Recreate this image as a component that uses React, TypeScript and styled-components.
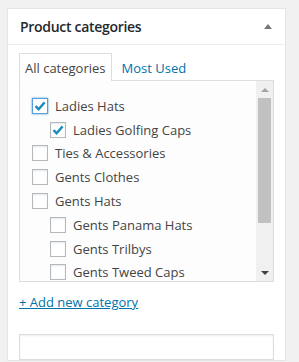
import * as React from 'react'
import styled, { createGlobalStyle } from 'styled-components'

const GlobalStyle = createGlobalStyle`
  html, body {
    margin: 0;
    background: #f1f1f1;
  }
  body {
    padding: 8px 14px 0 7px;
    font-family: 'Open Sans', 'Noto Sans', sans-serif;
    font-size: 13px;
    color: #444;
  }
`

const Panel = styled.div`
  width: 277px;
  background: #fff;
  border: 1px solid #e5e5e5;
  box-shadow: 0 1px 1px rgba(0, 0, 0, 0.04);
`

const Header = styled.div`
  height: 35px;
  display: flex;
  align-items: center;
  justify-content: space-between;
  padding: 0 12px;
  border-bottom: 1px solid #eee;
`

const Title = styled.h2`
  margin: 0;
  font-size: 14px;
  font-weight: 600;
  letter-spacing: -0.3px;
  color: #23282d;
`

const Toggle = styled.span`
  width: 0;
  height: 0;
  border-left: 4px solid transparent;
  border-right: 4px solid transparent;
  border-bottom: 5px solid #72777c;
  margin-right: 1px;
`

const Inside = styled.div`
  padding: 8px 11px 0;
`

const Tabs = styled.div`
  display: flex;
  align-items: flex-end;
`

const Tab = styled.div<{ $active?: boolean }>`
  height: 27px;
  display: flex;
  align-items: center;
  padding: 0 5px;
  margin-right: 4px;
  border: 1px solid ${p => (p.$active ? '#ddd' : 'transparent')};
  border-bottom: none;
  background: ${p => (p.$active ? '#fff' : 'transparent')};
  color: ${p => (p.$active ? '#444' : '#0073aa')};
  margin-bottom: -1px;
  position: relative;
`

const TabPanel = styled.div`
  height: 200px;
  display: flex;
  border: 1px solid #ddd;
  background: #fdfdfd;
`

const List = styled.ul`
  flex: 1;
  margin: 0;
  padding: 13px 12px 0;
  list-style: none;
  overflow: hidden;
`

const Row = styled.li<{ $depth?: number }>`
  height: 23.8px;
  display: flex;
  align-items: center;
  gap: 7px;
  padding-left: ${p => (p.$depth || 0) * 18}px;
  color: #444;
  white-space: nowrap;
`

const Box = styled.span<{ $focus?: boolean }>`
  width: 16px;
  height: 16px;
  flex: none;
  box-sizing: border-box;
  display: flex;
  align-items: center;
  justify-content: center;
  border: 1px solid ${p => (p.$focus ? '#5b9dd9' : '#b4b9be')};
  background: #fff;
  box-shadow: ${p =>
    p.$focus ? '0 0 2px rgba(30, 140, 190, 0.8)' : 'inset 0 1px 2px rgba(0, 0, 0, 0.1)'};
`

const Scrollbar = styled.div`
  width: 17px;
  flex: none;
  display: flex;
  flex-direction: column;
  background: #f0f0f0;
`

const Arrow = styled.div<{ $down?: boolean }>`
  height: 17px;
  display: flex;
  align-items: center;
  justify-content: center;

  &::after {
    content: '';
    border-left: 4px solid transparent;
    border-right: 4px solid transparent;
    ${p => (p.$down ? 'border-top: 4px solid #404040;' : 'border-bottom: 4px solid #a3a3a3;')}
  }
`

const Thumb = styled.div`
  height: 125px;
  margin: 0 2px;
  background: #c1c1c1;
`

const Track = styled.div`
  flex: 1;
`

const AddRow = styled.div`
  margin-top: 11px;
  line-height: 19px;
`

const AddLink = styled.a`
  color: #0073aa;
  text-decoration: underline;
`

const Input = styled.div`
  height: 24px;
  margin-top: 22px;
  border: 1px solid #ddd;
  background: #fff;
  box-shadow: inset 0 1px 2px rgba(0, 0, 0, 0.07);
`

const Check = () => (
  <svg width="14" height="14" viewBox="0 0 14 14">
    <path d="M2.5 7.2 L5.6 10.2 L11.6 3.4" fill="none" stroke="#1e8cbe" strokeWidth="2.4" />
  </svg>
)

const categories = [
  { name: 'Ladies Hats', depth: 0, checked: true, focus: true },
  { name: 'Ladies Golfing Caps', depth: 1, checked: true },
  { name: 'Ties & Accessories', depth: 0 },
  { name: 'Gents Clothes', depth: 0 },
  { name: 'Gents Hats', depth: 0 },
  { name: 'Gents Panama Hats', depth: 1 },
  { name: 'Gents Trilbys', depth: 1 },
  { name: 'Gents Tweed Caps', depth: 1 },
]

export default function App() {
  return (
    <>
      <GlobalStyle />
      <Panel>
        <Header>
          <Title>Product categories</Title>
          <Toggle />
        </Header>
        <Inside>
          <Tabs>
            <Tab $active>All categories</Tab>
            <Tab>Most Used</Tab>
          </Tabs>
          <TabPanel>
            <List>
              {categories.map(c => (
                <Row key={c.name} $depth={c.depth}>
                  <Box $focus={c.focus}>{c.checked && <Check />}</Box>
                  {c.name}
                </Row>
              ))}
            </List>
            <Scrollbar>
              <Arrow />
              <Thumb />
              <Track />
              <Arrow $down />
            </Scrollbar>
          </TabPanel>
          <AddRow>
            <AddLink href="#">+ Add new category</AddLink>
          </AddRow>
          <Input />
        </Inside>
      </Panel>
    </>
  )
}
